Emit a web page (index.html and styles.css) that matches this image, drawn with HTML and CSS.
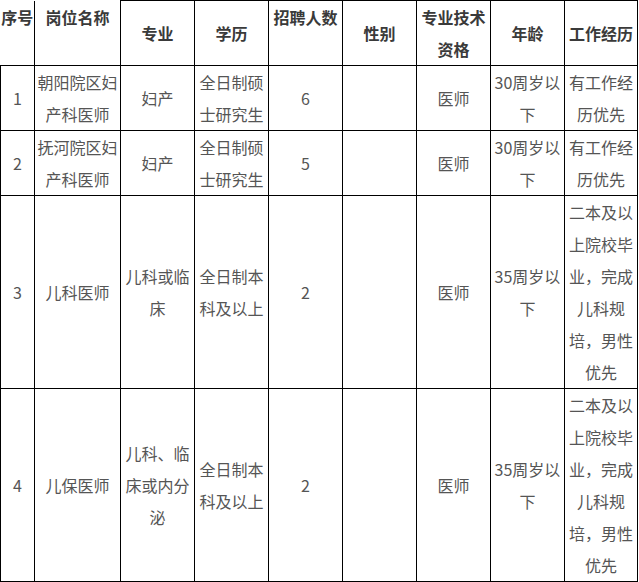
FILE: index.html
```html
<!DOCTYPE html>
<html lang="zh-CN">
<head>
<meta charset="utf-8">
<title>招聘岗位</title>
<link rel="stylesheet" href="styles.css">
</head>
<body>
<table class="jobs">
  <colgroup>
    <col class="c-no">
    <col class="c-name">
    <col class="c-std">
    <col class="c-std">
    <col class="c-std">
    <col class="c-std">
    <col class="c-std">
    <col class="c-std">
    <col class="c-last">
  </colgroup>
  <thead>
    <tr>
      <th class="top open open-left">序号</th>
      <th class="top open">岗位名称</th>
      <th>专业</th>
      <th>学历</th>
      <th class="top">招聘人数</th>
      <th>性别</th>
      <th>专业技术资格</th>
      <th>年龄</th>
      <th>工作经历</th>
    </tr>
  </thead>
  <tbody>
    <tr class="short">
      <td>1</td>
      <td>朝阳院区妇产科医师</td>
      <td>妇产</td>
      <td>全日制硕士研究生</td>
      <td>6</td>
      <td></td>
      <td>医师</td>
      <td>30周岁以下</td>
      <td>有工作经历优先</td>
    </tr>
    <tr class="short">
      <td>2</td>
      <td>抚河院区妇产科医师</td>
      <td>妇产</td>
      <td>全日制硕士研究生</td>
      <td>5</td>
      <td></td>
      <td>医师</td>
      <td>30周岁以下</td>
      <td>有工作经历优先</td>
    </tr>
    <tr>
      <td>3</td>
      <td>儿科医师</td>
      <td>儿科或临床</td>
      <td>全日制本科及以上</td>
      <td>2</td>
      <td></td>
      <td>医师</td>
      <td>35周岁以下</td>
      <td>二本及以上院校毕业，完成儿科规培，男性优先</td>
    </tr>
    <tr>
      <td>4</td>
      <td>儿保医师</td>
      <td>儿科、临床或内分泌</td>
      <td>全日制本科及以上</td>
      <td>2</td>
      <td></td>
      <td>医师</td>
      <td>35周岁以下</td>
      <td>二本及以上院校毕业，完成儿科规培，男性优先</td>
    </tr>
  </tbody>
</table>
</body>
</html>
```

FILE: styles.css
```css
html, body {
  margin: 0;
  padding: 0;
  background: #ffffff;
}

.jobs {
  border-collapse: collapse;
  table-layout: fixed;
  width: 638px;
  font-family: "Noto Sans CJK SC", "Liberation Sans", sans-serif;
  font-size: 16px;
  line-height: 32px;
}

.c-no { width: 34px; }
.c-name { width: 86px; }
.c-std { width: 74px; }
.c-last { width: 73px; }

.jobs th,
.jobs td {
  border: 1px solid #000;
  padding: 0;
  text-align: center;
  vertical-align: middle;
  word-break: break-all;
}

.jobs th {
  height: 64px;
  font-weight: bold;
  color: #3a3a3a;
}

.jobs th.top {
  vertical-align: top;
}

.jobs th.open {
  border-top: none;
}

.jobs th.open-left {
  border-left: none;
}

.jobs td {
  color: #555;
  height: 192px;
}

.jobs tr.short td {
  height: 64px;
}
```
